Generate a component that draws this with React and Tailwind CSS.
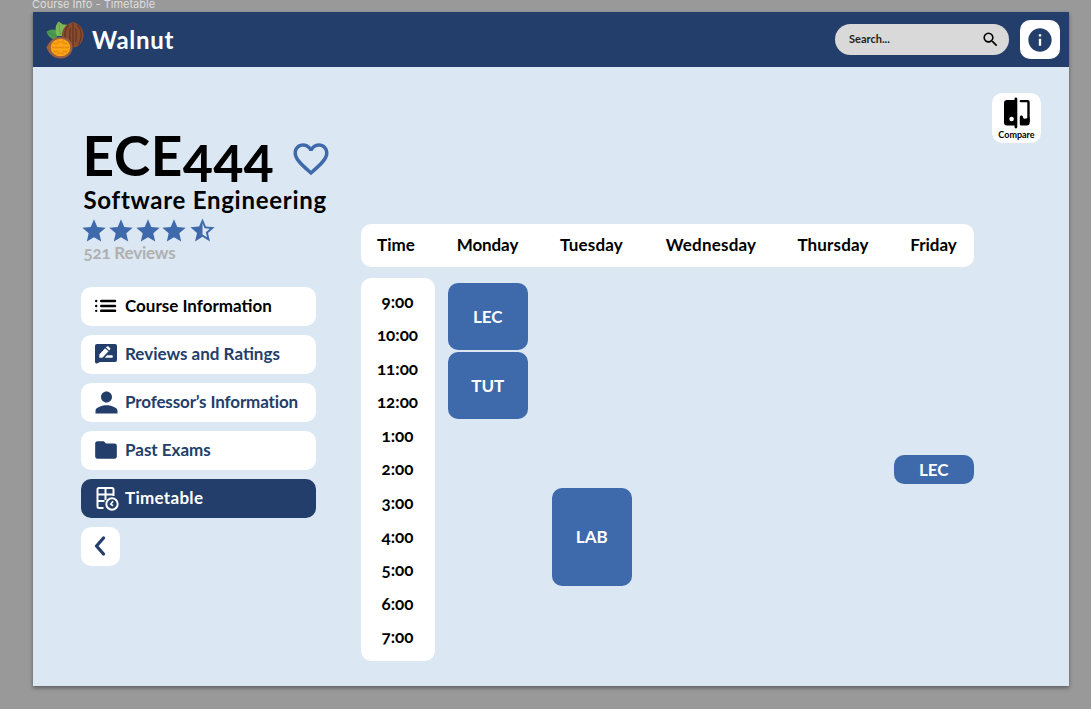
import React from "react";
import { MdSearch, MdInfo, MdFavoriteBorder, MdStar, MdStarHalf, MdPerson, MdFolder } from "react-icons/md";

const days = [
  { name: "Monday", cls: "w-[104px] tracking-[-0.1px]" },
  { name: "Tuesday", cls: "w-[104px] tracking-[0.15px]" },
  { name: "Wednesday", cls: "w-[135px] tracking-[0.2px]" },
  { name: "Thursday", cls: "w-[109px] tracking-[0.15px]" },
  { name: "Friday", cls: "w-[86px] pl-[6px]" },
];

const times = ["9:00", "10:00", "11:00", "12:00", "1:00", "2:00", "3:00", "4:00", "5:00", "6:00", "7:00"];

function Logo() {
  return (
    <svg viewBox="0 0 38 38" className="h-[38px] w-[38px] shrink-0">
      <path d="M10 18C5 19 2 15 0.500 10.500c5-2.500 9-3 12.500 1z" fill="#4c9a52" />
      <path d="M2 11l9 5" stroke="#3b8247" strokeWidth="0.800" />
      <path d="M11 15C8.500 9 9.500 4 12.500 0.500 15 2 16.500 3.500 17 3.500c2-.2 3.500 0 5 .5l-4 11z" fill="#7fb857" />
      <path d="M13 2.500l1.500 11M21 4.500l-6 9" stroke="#5fa14b" strokeWidth="0.900" />
      <path d="M27 1c6 1.500 10.500 6 10.500 13 0 6-4 12.500-10.500 12.500S16 20 16 14C16 7 21 2.500 27 1z" fill="#8a4b2e" />
      <path d="M27 2v24M22.500 4c-5 6-4.500 13-1 20M31.500 4c5 6 4.500 13 1 20M24.500 7c-1.500 5-1 9 0 14M29.500 7c1.500 5 1 9 0 14" stroke="#633521" strokeWidth="1.200" fill="none" />
      <path d="M0.500 26.500C4.500 18 9 16 14.500 16c7 0 12 4.500 12 10.500S21.500 37.500 14.500 37.500C8 37.500 3.500 34 0.500 26.500z" fill="#9b6044" />
      <ellipse cx="14.500" cy="26.500" rx="9.800" ry="8.800" fill="#fda615" />
      <path d="M5.500 26.500h18M7.500 22.500h5M16.500 22.500h5M7.500 30.500h5M16.500 30.500h5M11 19.500c2 2 5 2 7 0M11 33.500c2-2 5-2 7 0" stroke="#e88d10" strokeWidth="1.300" fill="none" />
    </svg>
  );
}

function ListIcon() {
  return (
    <svg viewBox="0 0 22 14" className="h-[14px] w-[22px]" fill="currentColor">
      <rect x="5" y="0.800" width="16.200" height="2.500" rx="1.200" />
      <rect x="5" y="5.700" width="16.200" height="2.500" rx="1.200" />
      <rect x="5" y="10.600" width="16.200" height="2.500" rx="1.200" />
      <circle cx="1.200" cy="2.050" r="1.200" />
      <circle cx="1.200" cy="6.950" r="1.200" />
      <circle cx="1.200" cy="11.850" r="1.200" />
    </svg>
  );
}

function ReviewIcon() {
  return (
    <svg viewBox="0 0 22 20" className="h-5 w-[22px]">
      <path d="M2 0h18a2 2 0 0 1 2 2v14a2 2 0 0 1-2 2H5l-2.500 1.300C1 20 0 19 0 17.500V2a2 2 0 0 1 2-2z" fill="currentColor" />
      <path d="M4.300 13.800v-3.300l5.900-6.300 3.300 3.100-6.100 6.500z" fill="#fff" />
      <path d="M11 3.400l.8-.8a1.200 1.200 0 0 1 1.700 0l1.500 1.400a1.200 1.200 0 0 1 0 1.700l-.7.800z" fill="#fff" />
      <path d="M9.700 13.800l2.400-2.500h4.500a1.250 1.250 0 0 1 0 2.500z" fill="#fff" />
    </svg>
  );
}

function TimetableIcon() {
  return (
    <svg viewBox="0 0 24 25" className="h-[25px] w-6 shrink-0" fill="none" stroke="currentColor" strokeWidth="2">
      <path d="M8.500 22H4a1.500 1.500 0 0 1-1.500-1.500v-17A1.500 1.500 0 0 1 4 2h13a1.500 1.500 0 0 1 1.500 1.500V10M2.500 8.500h16M2.500 15h7M10.500 2v12" />
      <circle cx="17" cy="18" r="5.700" />
      <path d="M18 15.200L15.800 18l2.200 1.800" strokeWidth="1.700" />
    </svg>
  );
}

function CompareIcon() {
  return (
    <svg viewBox="0 0 28 32" className="h-8 w-7">
      <path d="M11.500 2a1.400 1.400 0 0 1 2.800 0v28a1.400 1.400 0 0 1-2.800 0v-1.500H4a3 3 0 0 1-3-3V6a3 3 0 0 1 3-3h7.500z" fill="#000" />
      <circle cx="8.600" cy="22" r="2.300" fill="#fff" />
      <path d="M17.800 4.100h6.700a1 1 0 0 1 1 1V24" stroke="#000" strokeWidth="2.400" fill="none" strokeLinecap="round" />
      <path d="M16.800 20.500c0-2.500 3-2.500 3.300-.3.200 1.300.9 1.500 2 1.500l2.200-.7 2.400-1v5.500a3 3 0 0 1-3 3h-5.400a1.500 1.500 0 0 1-1.500-1.500z" fill="#000" />
    </svg>
  );
}

function NavItem({ icon, label, active, cls }) {
  return (
    <div className={"flex h-[39px] items-center rounded-[10px] pl-[14px] text-[17px] font-bold whitespace-nowrap " + (active ? "bg-[#233e6b] text-white " : "bg-white ") + cls}>
      <span className="flex w-[30.500px] shrink-0 items-center">{icon}</span>
      <span>{label}</span>
    </div>
  );
}

function Block({ label, cls }) {
  return (
    <div className={"flex w-[79.500px] items-center justify-center rounded-[10px] bg-[#3e69ab] text-[17px] font-bold text-white " + cls}>
      {label}
    </div>
  );
}

export default function App() {
  return (
    <div className="h-[709px] w-[1091px] overflow-hidden bg-[#999999] font-['Lato',sans-serif] [font-variant-numeric:oldstyle-nums]">
      <div className="flex h-3 items-end pl-8 font-['Inter',sans-serif] text-[11px] leading-[15px] text-[#dedede]">
        <span>Course Info - Timetable</span>
      </div>
      <div className="ml-[32.500px] flex h-[673.500px] w-[1036.500px] flex-col bg-[#dbe7f3] shadow-[0_2px_4px_rgba(0,0,0,0.4)]">
        <header className="flex h-[55px] shrink-0 items-center bg-[#233e6b] pl-[13px] pr-[9.500px]">
          <Logo />
          <span className="ml-[8.500px] text-[24px] font-bold tracking-[0.7px] text-white">Walnut</span>
          <div className="ml-auto flex h-[31px] w-[174px] items-center justify-between rounded-full bg-[#d9d9d9] pr-[9px] pl-[14px]">
            <span className="text-[11px] font-bold text-[#222]">Search...</span>
            <MdSearch className="h-[19px] w-[19px] text-black" />
          </div>
          <div className="ml-[11px] flex h-[39px] w-[39.500px] items-center justify-center rounded-[10px] bg-white text-[#233e6b]">
            <MdInfo className="h-7 w-7" />
          </div>
        </header>
        <div className="flex">
          <aside className="flex w-[328px] shrink-0 flex-col pl-12 pt-[59px]">
            <div className="flex h-[61px] items-start pl-[2px] text-black">
              <h1 className="w-[207px] text-[55px] leading-[58px] font-bold tracking-[0.6px] whitespace-nowrap">ECE444</h1>
              <MdFavoriteBorder className="mt-3 h-[42px] w-[42px] shrink-0 text-[#3e69ab]" />
            </div>
            <h2 className="pl-[3px] text-[24px] leading-[26px] font-bold tracking-[0.72px] whitespace-nowrap text-black">Software Engineering</h2>
            <div className="mt-[4px] flex h-[27px] items-center text-[#3e69ab]">
              {[0, 1, 2, 3].map((i) => (
                <span key={i} className="flex w-[26.800px] shrink-0 justify-center">
                  <MdStar className="h-7 w-7 shrink-0" />
                </span>
              ))}
              <MdStarHalf className="h-[29px] w-[29px] shrink-0" />
            </div>
            <div className="pl-[3px] text-[17px] leading-[18px] font-bold tracking-[-0.2px] text-[#b0b0b0]">521 Reviews</div>
            <nav className="mt-[24.500px] flex w-[235px] flex-col gap-[9px]">
              <NavItem icon={<ListIcon />} label="Course Information" cls="text-black" />
              <NavItem icon={<ReviewIcon />} label="Reviews and Ratings" cls="text-[#233e6b]" />
              <NavItem icon={<MdPerson className="-ml-[5px] h-[33px] w-[33px] shrink-0" />} label="Professor’s Information" cls="tracking-[-0.130px] text-[#233e6b]" />
              <NavItem icon={<MdFolder className="-ml-[2px] h-[26px] w-[26px] shrink-0" />} label="Past Exams" cls="text-[#233e6b]" />
              <NavItem icon={<TimetableIcon />} label="Timetable" active cls="tracking-[0.300px]" />
              <div className="flex h-[39px] w-[39px] items-center justify-center rounded-[10px] bg-white text-[#233e6b]">
                <svg viewBox="0 0 12 20" className="h-5 w-3" fill="none" stroke="currentColor" strokeWidth="3.200" strokeLinecap="round" strokeLinejoin="round">
                  <path d="M9.500 2L2.500 10l7 8" />
                </svg>
              </div>
            </nav>
          </aside>
          <main className="flex w-[708px] flex-col">
            <div className="flex h-[156.500px] justify-end pt-[25.500px] pr-[27.500px]">
              <div className="flex h-[50px] w-[49px] flex-col items-center rounded-[10px] bg-white pt-[4px]">
                <CompareIcon />
                <span className="text-[9px] leading-[11px] font-bold text-black">Compare</span>
              </div>
            </div>
            <div className="flex h-[43.500px] w-[613px] items-center rounded-[10px] bg-white text-center text-[17px] leading-[24px] font-bold text-black">
              <span className="w-[75px] shrink-0 pr-[4px]">Time</span>
              {days.map((d) => (
                <span key={d.name} className={"shrink-0 " + d.cls}>{d.name}</span>
              ))}
            </div>
            <div className="mt-[11px] flex">
              <div className="flex h-[383px] w-[74px] flex-col items-center rounded-[10px] bg-white pt-[6.500px] text-[17px] font-bold text-black">
                {times.map((t) => (
                  <span key={t} className="h-[33.600px] leading-[33.600px]">{t}</span>
                ))}
              </div>
              <div className="flex w-[104px] flex-col gap-[2px] pt-[5px] pl-[13.500px]">
                <Block label="LEC" cls="h-[67px]" />
                <Block label="TUT" cls="h-[67px]" />
              </div>
              <div className="w-[104px] pt-[210px] pl-[13.500px]">
                <Block label="LAB" cls="h-[98px]" />
              </div>
              <div className="ml-[238px] w-[93px] pt-[177px] pl-[13.500px]">
                <Block label="LEC" cls="h-[29px]" />
              </div>
            </div>
          </main>
        </div>
      </div>
    </div>
  );
}
